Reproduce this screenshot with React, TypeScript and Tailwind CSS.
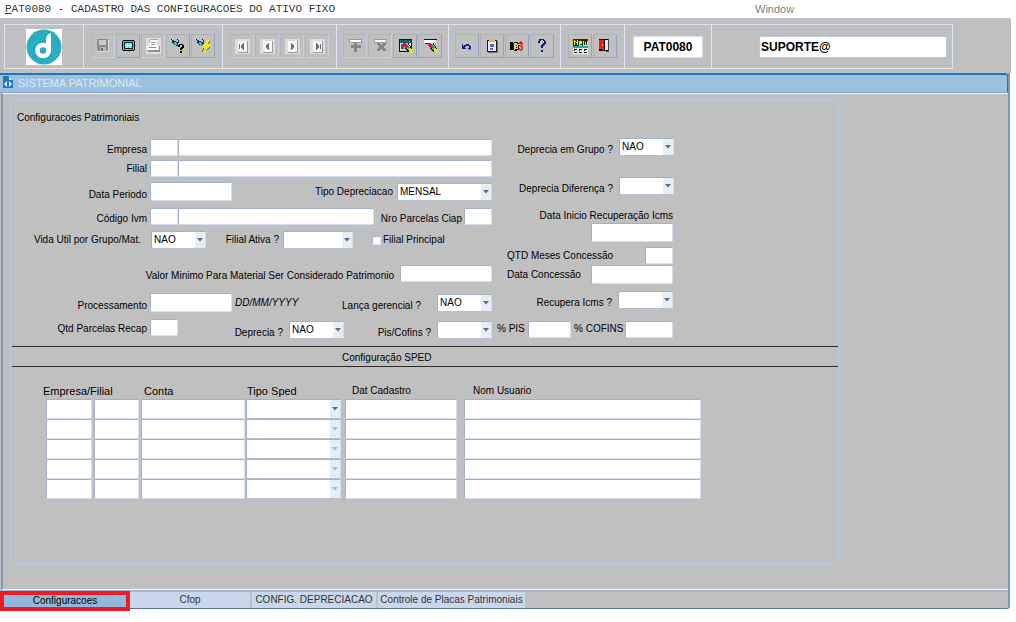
import { useState } from 'react';
import type { ReactNode } from 'react';
import clsx from 'clsx';

const LABEL = 'block shrink-0 whitespace-nowrap leading-3';
const LEFT_LABEL = 'w-[139px] pr-[3px] text-right';
const BOX =
  'block shrink-0 rounded-[2px] border border-t-[#a3b1c6] border-l-[#a3b1c6] border-r-[#d3dff0] border-b-[#d3dff0] bg-white px-0.5 text-[10px] text-black outline-none';

function Label({ id, className, children }: { id: string; className?: string; children: ReactNode }) {
  return (
    <label htmlFor={id} className={clsx(LABEL, className)}>
      {children}
    </label>
  );
}

function TextBox({ id, label, className }: { id?: string; label?: string; className: string }) {
  return <input id={id} type="text" aria-label={label} className={clsx(BOX, className)} />;
}

function SelectBox({
  id,
  label,
  value = '',
  muted,
  className,
}: {
  id?: string;
  label?: string;
  value?: string;
  muted?: boolean;
  className: string;
}) {
  return (
    <span className={clsx('relative block shrink-0', className)}>
      <select
        id={id}
        aria-label={label}
        defaultValue={value}
        className="block h-full w-full appearance-none rounded-[2px] border border-[#a3b1c6] border-r-[#d3dff0] border-b-[#b4c0d2] bg-white pl-0.5 text-[10px] leading-3 text-black outline-none"
      >
        <option value={value}>{value}</option>
      </select>
      <span className="pointer-events-none absolute inset-y-px right-px flex w-2.5 items-center justify-center bg-[#e6edf5]">
        <svg width="6" height="4" viewBox="0 0 6 4" className={muted ? 'text-[#b4b8b8]' : 'text-[#5c6c8c]'}>
          <path d="M0 0h6L3 3.500z" fill="currentColor" />
        </svg>
      </span>
    </span>
  );
}

const NavTile = ({ children }: { children: ReactNode }) => (
  <>
    <path d="M4 4h15v15H4z" fill="#dcdcdc" />
    <path d="M7 6h9v11H7z" fill="#f6f6f6" />
    <path d="M16 6h1v12H7v-1h9z" fill="#9a9a9a" />
    <g fill="#6e6e6e">{children}</g>
  </>
);

const Pen = () => (
  <>
    <path d="M9 8h3v1h1v1h1v3h-3v-1h-1v-1H9z" fill="#e0145a" />
    <path d="M13 11h2v1h1v2h-2v-1h-1z" fill="#15b01a" />
    <path d="M15 13h2v1h1v1h1v3h-2v-1h-1v-1h-1z" fill="#e8e020" />
    <path d="M14 8h1v2h1v1h1v2h1v1h-1v-1h-1v-2h-1v-1h-1zM11 13h2v1h1v1h1v2h-1v-1h-1v-1h-1v-1h-1z" fill="#222" />
  </>
);

const Torch = () => (
  <>
    <path d="M5 5h2v1h2v1h2V5h1v4h-1v2H9v-1H7V9H6V7H5z" fill="#123a7a" />
    <path d="M7 7h2v1h1v2H8V9H7z" fill="#27c8d8" />
    <path d="M4 4h1v1H4zM10 4h1v1h-1zM5 7h1v1H5z" fill="#000" />
  </>
);

const ICONS: Record<string, ReactNode> = {
  save: (
    <>
      <path d="M5 4h11v12H6l-1-1z" fill="#8b8b8b" />
      <path d="M7 5h7v5H7z" fill="#c9c9c9" />
      <path d="M8 12h6v4H8z" fill="#b4b4b4" />
      <path d="M9 13h2v3H9z" fill="#6d6d6d" />
      <path d="M16 5h1v12H6v-1h10z" fill="#e0e0e0" />
    </>
  ),
  screen: (
    <>
      <path d="M6 5h11v1h1v9h-1v1H6v-1H5V6h1z" fill="#000" />
      <path d="M6 6h11v9H6z" fill="#9a9a9a" />
      <path d="M7 7h9v7H7z" fill="#062b35" />
      <path d="M8 8h7v5H8z" fill="#65e0df" />
      <path d="M10 8h1v5h-1zM13 8h1v5h-1zM8 10h7v1H8z" fill="#c6faf6" />
    </>
  ),
  print: (
    <>
      <path d="M4 3h15v16H4z" fill="#dedede" />
      <path d="M8 5h8v1h-1v5H7V8h1z" fill="#fafafa" />
      <path d="M9 7h5v1H9zM9 9h4v1H9zM8 4h8v1H8zM7 5h1v3H7z" fill="#a8a8a8" />
      <path d="M5 11h12v4H5z" fill="#fafafa" />
      <path d="M5 15h12v-4h1v6H6v-1H5zM7 12h7v1H7z" fill="#909090" />
    </>
  ),
  query: (
    <>
      <Torch />
      <path d="M11 8h2v1h-2zM18 9h1v2h-1zM17 15h1v2h-1zM10 14h1v2h-1zM12 17h1v1h-1zM15 17h1v1h-1z" fill="#e6df2d" />
      <path d="M12 9h4v1h1v3h-1v1h-1v1h-2v-2h1v-1h1v-2h-2v2h-2v-2h1zM13 16h2v2h-2z" fill="#000" />
    </>
  ),
  execute: (
    <>
      <Torch />
      <path d="M14 5h4v2h-1v2h2v1h-1v1h-1v1h-1v1h-1v1h-1v1h-1v1h-1v1h-1v1h-1v-3h1v-2h1v-1h-3v-1h1v-1h1v-1h1V9h1V7h1z" fill="#f0e82c" />
      <path d="M17 6h1v2h-1v1h-1V8h1zM11 13h1v2h-1v2h-1v-2h1zM16 13h1v-1h1v1h-1v1h-1v1h-1v-1h1z" fill="#66631c" />
    </>
  ),
  first: (
    <NavTile>
      <path d="M8 9h1v5H8zM12 8h1v7h-1v-1h-1v-1h-1v-3h1V9h1z" />
    </NavTile>
  ),
  prev: (
    <NavTile>
      <path d="M12 8h1v7h-1v-1h-1v-1h-1v-3h1V9h1z" />
    </NavTile>
  ),
  next: (
    <NavTile>
      <path d="M10 8h1v1h1v1h1v3h-1v1h-1v1h-1z" />
    </NavTile>
  ),
  last: (
    <NavTile>
      <path d="M14 9h1v5h-1zM10 8h1v1h1v1h1v3h-1v1h-1v1h-1z" />
    </NavTile>
  ),
  insert: (
    <>
      <path d="M5 4h13v4H5z" fill="#9a9a9a" />
      <path d="M6 5h11v2H6z" fill="#fafafa" />
      <path d="M10 7h3v3h4v3h-4v4h-3v-4H7v-3h3z" fill="#858585" />
    </>
  ),
  remove: (
    <>
      <path d="M5 4h13v4H5z" fill="#9a9a9a" />
      <path d="M6 5h11v2H6z" fill="#fafafa" />
      <path d="M8 8h3v1h1v1h1V9h1V8h3v2h-1v1h-1v2h1v1h1v2h-3v-1h-1v-1h-1v1h-1v1H8v-2h1v-1h1v-2H9v-1H8z" fill="#858585" />
    </>
  ),
  lock: (
    <>
      <path d="M5 4h13v9h-1V8H6v8h8v1H5z" fill="#111" />
      <path d="M6 5h11v3H6z" fill="#17656b" />
      <path d="M6 8h3v7H6zM14 8h3v4h-3z" fill="#dedede" />
      <path d="M7 9h3v5H7z" fill="#555" />
      <Pen />
    </>
  ),
  clear: (
    <>
      <path d="M5 4h13v1H5zM6 8h3v1H6z" fill="#111" />
      <path d="M5 5h12v3H5z" fill="#fff" />
      <Pen />
    </>
  ),
  undo: (
    <path d="M6 9h1v2h1v-1h2V9h3v1h1v1h1v3h-1v1h-1v-1h-1v-1h1v-2h-3v1H9v1h1v1H6z" fill="#1a1e86" />
  ),
  clipboard: (
    <>
      <path d="M6 5h10v12H6z" fill="#1c1c1c" />
      <path d="M7 6h8v10H7z" fill="#e9eef8" />
      <path d="M9 4h4v1h1v2H8V5h1z" fill="#cfc235" />
      <path d="M9 9h4v3H9zM9 13h3v2H9z" fill="#5862d8" />
      <path d="M16 6h1v12H7v-1h9z" fill="#777" />
    </>
  ),
  list: (
    <>
      <path d="M4 7h3v8H4z" fill="#0a0a0a" />
      <path d="M8 7h4v1h4v3h-3v4h-2v1H8v-1H7V8h1z" fill="#161608" />
      <path d="M8 8h3v1h4v1h-3v4H9v1H8z" fill="#dcd27e" />
      <path d="M10 10h1v1h-1zM10 12h1v1h-1z" fill="#161608" />
      <path d="M13 7h1V6h2v1h1v3h-1v1h1v4h-1v1h-2v-1h-1v-2h1v1h1v-2h-1v-2h1V8h-1v1h-1z" fill="#e8383c" />
    </>
  ),
  help: (
    <path d="M8 4h5v1h1v1h1v3h-1v1h-1v1h-1v2h-2v-3h1V9h1V8h1V6h-1V5h-2v1H9v2H7V6h1zM10 15h2v2h-2z" fill="#17178c" />
  ),
  menu: (
    <>
      <path d="M4 4h15v7H4z" fill="#2a2a0c" />
      <path d="M5 5h1v1h1v1h1V5h1v5H8V8H7V7H6v3H5zM10 6h3v3h-2v1h2v1h-3zM14 6h1v4h1V7h1v3h1V6h1v5h-5z" fill="#f0e81c" />
      <path d="M4 11h15v2H4z" fill="#16aaaa" />
      <path d="M4 13h15v6H4z" fill="#f0f0f0" />
      <path d="M5 14h3v1H6v1H5zM10 14h3v1h-2v1h-1zM15 14h3v1h-2v1h-1zM5 17h3v1H5zM10 17h3v1h-3zM15 17h3v1h-3z" fill="#111" />
    </>
  ),
  exit: (
    <>
      <path d="M5 4h9v12H5z" fill="#0b0b0b" />
      <path d="M5 5h5v10H8v-1H5z" fill="#ee1c16" />
      <path d="M11 5h3v10h-3z" fill="#e4e4e4" />
      <path d="M14 4h1v13h-3v-1h2z" fill="#444" />
      <path d="M8 9h1v2H8z" fill="#ffd400" />
    </>
  ),
};

type Tool = { icon: string; title: string; disabled?: boolean };

const TOOL_GROUPS: { pad: string; tools: Tool[] }[] = [
  {
    pad: 'px-[7px]',
    tools: [
      { icon: 'save', title: 'Salvar', disabled: true },
      { icon: 'screen', title: 'Tela' },
      { icon: 'print', title: 'Imprimir', disabled: true },
      { icon: 'query', title: 'Entrar consulta' },
      { icon: 'execute', title: 'Executar consulta' },
    ],
  },
  {
    pad: 'px-[7px]',
    tools: [
      { icon: 'first', title: 'Primeiro', disabled: true },
      { icon: 'prev', title: 'Anterior', disabled: true },
      { icon: 'next', title: 'Proximo', disabled: true },
      { icon: 'last', title: 'Ultimo', disabled: true },
    ],
  },
  {
    pad: 'px-1.5',
    tools: [
      { icon: 'insert', title: 'Inserir', disabled: true },
      { icon: 'remove', title: 'Remover', disabled: true },
      { icon: 'lock', title: 'Limpar bloco' },
      { icon: 'clear', title: 'Limpar registro' },
    ],
  },
  {
    pad: 'px-1.5',
    tools: [
      { icon: 'undo', title: 'Desfazer' },
      { icon: 'clipboard', title: 'Editar' },
      { icon: 'list', title: 'Lista de valores' },
      { icon: 'help', title: 'Ajuda' },
    ],
  },
  {
    pad: 'px-[7px]',
    tools: [
      { icon: 'menu', title: 'Menu' },
      { icon: 'exit', title: 'Sair' },
    ],
  },
];

function Toolbar() {
  return (
    <header className="mr-[5px] bg-[#c0c0c0] px-1 pt-1.5 pb-1">
      <div className="flex h-[45px] w-fit items-stretch divide-x divide-[#dbe7f8] border border-[#dbe7f8]">
        <div className="flex w-[79px] items-center justify-center">
          <svg width="36" height="36" viewBox="0 0 36 36" className="bg-white" role="img" aria-label="Logo">
            <circle cx="18" cy="18" r="17.500" fill="#2badc1" />
            <circle cx="17" cy="21.500" r="5.500" fill="none" stroke="#fff" strokeWidth="4.500" />
            <path d="M25 4c-3 1-5 3-5 6v12h5z" fill="#fff" />
            <path d="M25 21c0 5-4 8-9 8 4-2 5-4 5-8z" fill="#fff" />
          </svg>
        </div>
        {TOOL_GROUPS.map(({ pad, tools }) => (
          <div key={tools[0].icon} className={clsx('flex items-center gap-px pb-px', pad)}>
            {tools.map(({ icon, title, disabled }) => (
              <button
                key={icon}
                type="button"
                aria-label={title}
                disabled={disabled}
                className={clsx(
                  'h-6 w-6 border',
                  disabled
                    ? 'border-[#b2b5ba] border-r-[#c5d2e5] border-b-[#c5d2e5]'
                    : 'border-[#aeb1b6] border-r-[#8fa4c4] border-b-[#8fa4c4]'
                )}
              >
                <svg width="22" height="22" viewBox="0 0 22 22" shapeRendering="crispEdges">
                  {ICONS[icon]}
                </svg>
              </button>
            ))}
          </div>
        ))}
        <div className="flex items-center px-2">
          <input
            aria-label="Programa"
            defaultValue="PAT0080"
            className="h-[22px] w-[70px] rounded-[2px] border border-[#d3dff0] bg-white text-center text-xs font-bold outline-none"
          />
        </div>
        <div className="flex items-center pr-[5px] pl-[47px]">
          <input
            aria-label="Usuario"
            defaultValue="SUPORTE@"
            className="h-[22px] w-[188px] rounded-[2px] border border-[#b9c8dd] bg-white px-px text-xs font-bold outline-none"
          />
        </div>
      </div>
    </header>
  );
}

function LeftFields() {
  return (
    <div className="w-[482px] shrink-0 pt-px">
      <div className="flex items-end">
        <Label id="empresa" className={LEFT_LABEL}>Empresa</Label>
        <TextBox id="empresa" className="h-[17px] w-7" />
        <TextBox label="Nome da empresa" className="h-[17px] w-[314px]" />
      </div>
      <div className="mt-1 flex items-center">
        <Label id="filial" className={LEFT_LABEL}>Filial</Label>
        <TextBox id="filial" className="h-[17px] w-7" />
        <TextBox label="Nome da filial" className="h-[17px] w-[314px]" />
      </div>
      <div className="mt-[5px] flex items-end">
        <Label id="periodo" className={LEFT_LABEL}>Data Periodo</Label>
        <TextBox id="periodo" className="h-[19px] w-[82px]" />
        <Label id="tipo" className="ml-auto self-center pr-1">Tipo Depreciacao</Label>
        <SelectBox id="tipo" value="MENSAL" className="mr-px h-[18px] w-[95px]" />
      </div>
      <div className="mt-[7px] flex items-end">
        <Label id="ivm" className={LEFT_LABEL}>Código Ivm</Label>
        <TextBox id="ivm" className="h-[17px] w-7" />
        <TextBox label="Descricao Ivm" className="h-[17px] w-[196px]" />
        <Label id="ciap" className="ml-auto pr-0.5">Nro Parcelas Ciap</Label>
        <TextBox id="ciap" className="mr-px h-[17px] w-7" />
      </div>
      <div className="mt-1.5 flex items-center">
        <Label id="vida" className="w-[140px] pr-2.5 text-right">Vida Util por Grupo/Mat.</Label>
        <SelectBox id="vida" value="NAO" className="h-[18px] w-[55px]" />
        <Label id="ativa" className="w-[77px] pr-1 text-right">Filial Ativa ?</Label>
        <SelectBox id="ativa" className="h-[18px] w-[70px]" />
        <input
          id="principal"
          type="checkbox"
          className="ml-[19px] size-[9px] appearance-none border border-[#d3dff0] border-t-[#a3b1c6] border-l-[#a3b1c6] bg-white checked:bg-[#5c6c8c]"
        />
        <Label id="principal" className="pl-0.5">Filial Principal</Label>
      </div>
      <div className="mt-4 flex items-end justify-end pr-px">
        <Label id="minimo" className="pr-1.5">Valor Minimo Para Material Ser Considerado Patrimonio</Label>
        <TextBox id="minimo" className="h-[17px] w-[92px]" />
      </div>
      <div className="mt-[11px] flex items-end">
        <Label id="processamento" className={LEFT_LABEL}>Processamento</Label>
        <TextBox id="processamento" className="h-[19px] w-[82px]" />
        <span className="self-center pl-[3px] leading-3 italic">DD/MM/YYYY</span>
        <Label id="gerencial" className="ml-auto pr-4">Lança gerencial ?</Label>
        <SelectBox id="gerencial" value="NAO" className="mr-px h-[18px] w-[55px]" />
      </div>
    </div>
  );
}

function RightFields() {
  return (
    <div className="flex w-[181px] shrink-0 flex-col items-end">
      <div className="flex items-end">
        <Label id="grupo" className="pr-1.5">Deprecia em Grupo ?</Label>
        <SelectBox id="grupo" value="NAO" className="h-[18px] w-[55px]" />
      </div>
      <div className="mt-[21px] flex items-end">
        <Label id="diferenca" className="pr-1.5">Deprecia Diferença ?</Label>
        <SelectBox id="diferenca" className="h-[18px] w-[55px]" />
      </div>
      <Label id="inicio" className="mt-[15px] pr-px">Data Inicio Recuperação Icms</Label>
      <TextBox id="inicio" className="mt-px mr-px h-[19px] w-[82px]" />
      <div className="mt-[5px] flex w-[167px] items-center justify-between pr-px">
        <Label id="meses">QTD Meses Concessão</Label>
        <TextBox id="meses" className="h-[17px] w-7" />
      </div>
      <div className="mt-px flex w-[167px] items-center justify-between pr-px">
        <Label id="concessao">Data Concessão</Label>
        <TextBox id="concessao" className="h-[19px] w-[82px]" />
      </div>
      <div className="mt-[7px] flex items-end pr-px">
        <Label id="recupera" className="pr-1.5">Recupera Icms ?</Label>
        <SelectBox id="recupera" className="h-[18px] w-[55px]" />
      </div>
    </div>
  );
}

function SpedTable() {
  return (
    <table className="mt-4 ml-8 w-[658px] table-fixed border-collapse text-left">
      <colgroup>
        <col className="w-[51px]" />
        <col className="w-[47px]" />
        <col className="w-[105px]" />
        <col className="w-[99px]" />
        <col className="w-[119px]" />
        <col />
      </colgroup>
      <thead>
        <tr className="h-4 leading-3">
          <th colSpan={2} className="p-0 text-[11px] font-normal">Empresa/Filial</th>
          <th className="p-0 pl-[3px] text-[11px] font-normal">Conta</th>
          <th className="p-0 pl-px text-[11px] font-normal">Tipo Sped</th>
          <th className="p-0 pl-[7px] font-normal">Dat Cadastro</th>
          <th className="p-0 pl-[9px] font-normal">Nom Usuario</th>
        </tr>
      </thead>
      <tbody>
        {[1, 2, 3, 4, 5].map((n) => (
          <tr key={n} className="h-5">
            <td className="p-0 pr-0.5 pl-[3px]"><TextBox label={`Empresa ${n}`} className="h-5 w-full" /></td>
            <td className="p-0 pr-0.5"><TextBox label={`Filial ${n}`} className="h-5 w-full" /></td>
            <td className="p-0 pr-px"><TextBox label={`Conta ${n}`} className="h-5 w-full" /></td>
            <td className="p-0 pr-1"><SelectBox label={`Tipo Sped ${n}`} muted={n > 1} className="h-5 w-full" /></td>
            <td className="p-0 pr-[7px]"><TextBox label={`Dat Cadastro ${n}`} className="h-5 w-full" /></td>
            <td className="p-0"><TextBox label={`Nom Usuario ${n}`} className="h-5 w-full" /></td>
          </tr>
        ))}
      </tbody>
    </table>
  );
}

const TABS = [
  { name: 'Configuracoes', width: 'w-[130px]' },
  { name: 'Cfop', width: 'w-[120px]' },
  { name: 'CONFIG. DEPRECIACAO', width: 'w-[124px]' },
  { name: 'Controle de Placas Patrimoniais', width: 'w-[147px]' },
];

export default function App() {
  const [tab, setTab] = useState('Configuracoes');

  return (
    <div className="min-h-screen bg-white font-['Liberation_Sans',Arial,sans-serif] text-[10px] text-black">
      <div className="flex h-[18px] items-center pl-[5px] leading-4">
        <h1 className="w-[750px] font-['Liberation_Mono','Courier_New',monospace] text-[11px] text-[#333]">
          <span className="underline">P</span>AT0080 - CADASTRO DAS CONFIGURACOES DO ATIVO FIXO
        </h1>
        <button type="button" className="text-[11px] text-[#808080]">Window</button>
      </div>

      <Toolbar />

      <main className="mr-1.5 rounded-b-[3px] border-r-2 border-b border-r-[#8497b2] border-b-[#5a7290] bg-[#c0c0c0]">
        <div className="flex h-5 items-center gap-[5px] rounded-tr-[3px] border-t-2 border-r border-b border-[#1b78bd] border-b-[#7fa3c6] bg-[#9dc0e0] pl-[3px]">
          <svg width="10" height="12" viewBox="0 0 10 12" className="mb-1" aria-hidden="true">
            <path d="M0 0h6l4 4v8H0z" fill="#1b78bd" />
            <path d="M6 0v4h4z" fill="#cfe2f3" />
            <path d="M4 5 1 8l3 3zM6 5l3 3-3 3z" fill="#fff" />
          </svg>
          <h2 className="text-[11px] text-[#dbe9f6]">SISTEMA PATRIMONIAL</h2>
        </div>

        <div className="ml-px border-y border-l-2 border-[#f2f6fb] border-l-[#8497b2] pt-1.5 pr-[169px] pb-6 pl-[7px]">
          <fieldset className="min-w-0 rounded-[4px] border border-[#b4cbea] pt-[11px] pb-[65px]">
            <h3 className="pl-1.5 leading-3">Configuracoes Patrimoniais</h3>
            <div className="mt-3.5 flex">
              <LeftFields />
              <RightFields />
            </div>
            <div className="mt-[7px] flex h-5 items-end">
              <Label id="recap" className={clsx(LEFT_LABEL, 'self-center')}>Qtd Parcelas Recap</Label>
              <TextBox id="recap" className="h-[17px] w-7 self-start" />
              <Label id="deprecia" className="w-[111px] pr-1.5 text-right">Deprecia ?</Label>
              <SelectBox id="deprecia" value="NAO" className="h-[18px] w-[55px]" />
              <Label id="pis" className="w-[93px] pr-1.5 text-right">Pis/Cofins ?</Label>
              <SelectBox id="pis" className="h-[18px] w-[55px]" />
              <Label id="pct-pis" className="w-9 self-center pl-[5px]">% PIS</Label>
              <TextBox id="pct-pis" className="h-[17px] w-[43px] self-center" />
              <Label id="pct-cofins" className="w-[54px] self-center pl-[3px]">% COFINS</Label>
              <TextBox id="pct-cofins" className="h-[17px] w-12 self-center" />
            </div>
            <h3 className="mt-[7px] ml-px border-y border-[#2c2c2c] pt-[5px] pb-0.5 pl-[330px] leading-3">
              Configuração SPED
            </h3>
            <SpedTable />
          </fieldset>
        </div>

        <nav className="flex h-[18px] border-t-2 border-[#a5b5d0] text-[#333]">
          {TABS.map(({ name, width }) => (
            <button
              key={name}
              type="button"
              onClick={() => setTab(name)}
              className={clsx(
                'leading-4 whitespace-nowrap',
                width,
                name === tab
                  ? 'relative z-10 -mt-px -mb-1 h-5 border-4 border-[#ed1c24] bg-[#93b8d9] leading-none text-black'
                  : 'mr-0.5 bg-[#c9d7eb]'
              )}
            >
              {name}
            </button>
          ))}
        </nav>
      </main>
    </div>
  );
}
